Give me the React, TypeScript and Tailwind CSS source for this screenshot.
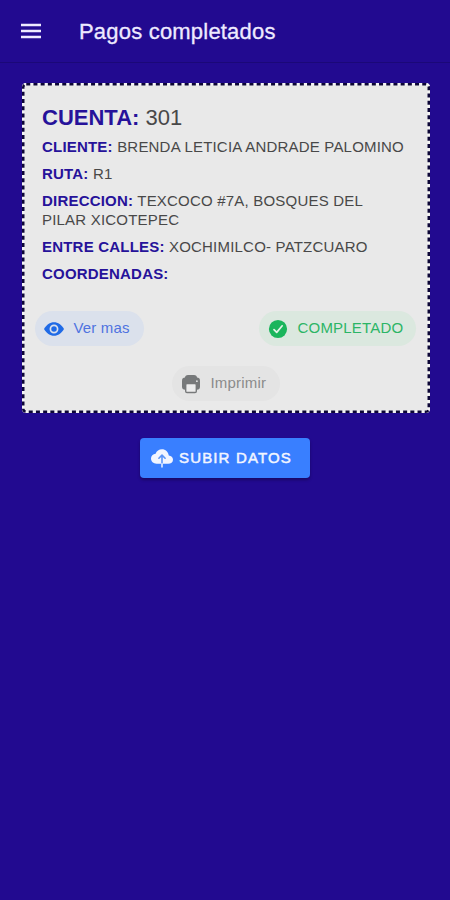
import type { ReactNode } from "react";

function Field({ label, children }: { label: string; children?: ReactNode }) {
  return (
    <p className="mb-[8px] text-[15px] leading-[19px] tracking-[0.2px]">
      <b className="text-[#26129a]">{label}</b> {children}
    </p>
  );
}

function MenuIcon() {
  return (
    <svg viewBox="0 0 20 16" className="h-4 w-5" stroke="currentColor" strokeWidth="2.4">
      <path d="M0 2h20M0 8h20M0 14h20" />
    </svg>
  );
}

function EyeIcon() {
  return (
    <svg viewBox="0 0 22 22" className="size-[22px]">
      <path
        d="M1 11C3.4 6.8 7 4.2 11 4.2S18.6 6.8 21 11c-2.4 4.2-6 6.8-10 6.8S3.4 15.2 1 11Z"
        fill="currentColor"
      />
      <circle cx="11" cy="11" r="3.6" fill="none" stroke="#dbe1ec" strokeWidth="1.7" />
    </svg>
  );
}

function CheckIcon() {
  return (
    <svg viewBox="0 0 22 22" className="size-[22px]">
      <circle cx="11" cy="11" r="9.1" fill="currentColor" />
      <path d="m7 11.6 2.7 2.8 5.5-6.6" fill="none" stroke="#e4f2e8" strokeWidth="1.7" strokeLinecap="round" strokeLinejoin="round" />
    </svg>
  );
}

function PrintIcon() {
  return (
    <svg viewBox="0 0 22 22" className="size-[22px]">
      <path d="M4.8 5.2Q5.2 2 8 2h6q2.8 0 3.2 3.2Z" fill="currentColor" />
      <rect x="2" y="4.6" width="18" height="12.2" rx="3.2" fill="currentColor" />
      <circle cx="16.9" cy="8.2" r="0.9" fill="#e4e4e4" />
      <rect x="5.7" y="10.5" width="10.6" height="9" rx="1.3" fill="#ececec" stroke="currentColor" strokeWidth="1.4" />
    </svg>
  );
}

function UploadIcon() {
  return (
    <svg viewBox="0 0 22 22" className="size-[22px]">
      <path
        d="M17.8 8.6C17.3 4.9 14.5 2.2 11 2.2c-3 0-5.4 1.7-6.4 4.5C2 7 0 8.8 0 11.6c0 3.1 2.4 5.2 5.6 5.2h11.5c2.8 0 4.9-1.5 4.9-4.1 0-2.4-1.8-3.8-4.2-4.1Z"
        fill="currentColor"
      />
      <path d="m7.9 11.2 3.1-3.1 3.1 3.1M11 8.500v8.300" fill="none" stroke="#5b94f7" strokeWidth="1.6" strokeLinecap="round" strokeLinejoin="round" />
      <path d="M11 16.800v3" stroke="#dce7ff" strokeWidth="1.7" strokeLinecap="round" />
    </svg>
  );
}

export default function App() {
  return (
    <div className="flex min-h-[900px] w-[450px] flex-col bg-[#220a90] font-['Liberation_Sans',Arial,sans-serif]">
      <header className="flex h-[63px] items-center border-b border-[#1b0878] pl-[21px] text-[#eeeaff]">
        <MenuIcon />
        <h1 className="ml-[38px] text-[22px] tracking-[0.2px] [-webkit-text-stroke:0.3px_currentColor]">Pagos completados</h1>
      </header>

      <main className="flex flex-col items-center">
        <section className="relative mt-5 ml-px h-[330px] w-[408px] rounded-[4px] bg-[#e9e9e9] p-[2px] text-[#484848]">
          <svg viewBox="0 0 408 330" className="pointer-events-none absolute inset-0 h-full w-full" fill="none">
            <rect x="1.25" y="1.25" width="405.5" height="327.5" rx="3" stroke="#f4f4f4" strokeWidth="2.5" />
            <rect x="1.25" y="1.25" width="405.5" height="327.5" rx="3" stroke="#0c0636" strokeWidth="2.5" strokeDasharray="4 3.2" />
          </svg>
          <div className="pr-[18px] pl-[18.5px] pt-[19px]">
            <h2 className="mb-[6px] text-[22px] leading-[27px]">
              <b className="text-[#26129a]">CUENTA:</b> 301
            </h2>
            <Field label="CLIENTE:">BRENDA LETICIA ANDRADE PALOMINO</Field>
            <Field label="RUTA:">R1</Field>
            <Field label="DIRECCION:">
              TEXCOCO #7A, BOSQUES DEL
              <br />
              PILAR XICOTEPEC
            </Field>
            <Field label="ENTRE CALLES:">XOCHIMILCO- PATZCUARO</Field>
            <Field label="COORDENADAS:" />
          </div>
          <div className="mt-[28px] flex justify-between pr-[12px] pl-[11px] text-[15px]">
            <button className="flex h-[35px] w-[109px] items-center gap-[9px] rounded-full bg-[#dbe1ec] pl-[8px] tracking-[0.15px] text-[#4f73e0]">
              <span className="text-[#1f6ae6]"><EyeIcon /></span>
              Ver mas
            </button>
            <button className="flex h-[35px] w-[157px] items-center gap-[9px] rounded-full bg-[#dbe8df] pl-[8px] tracking-[0.2px] text-[#2cb566]">
              <span className="text-[#1bb55c]"><CheckIcon /></span>
              COMPLETADO
            </button>
          </div>
          <div className="mt-[20px] flex justify-center">
            <button className="flex h-[35px] w-[108px] items-center gap-[9px] rounded-full bg-[#e4e4e4] pl-[8px] text-[15px] tracking-[0.2px] text-[#8b8b8b]">
              <span className="text-[#77797a]"><PrintIcon /></span>
              Imprimir
            </button>
          </div>
        </section>

        <button className="mt-[25px] flex h-10 w-[170px] items-center gap-[6px] rounded-[4px] bg-[#397fff] pl-[11px] text-[15px] tracking-[1.15px] text-[#f2f5ff] shadow-[0_2px_3px_rgba(0,0,0,0.3)] [-webkit-text-stroke:0.5px_currentColor]">
          <UploadIcon />
          SUBIR DATOS
        </button>
      </main>
    </div>
  );
}
